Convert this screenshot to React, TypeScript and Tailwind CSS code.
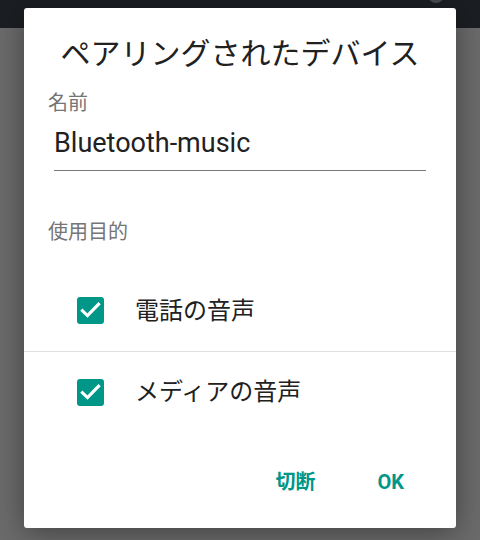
import React from "react";

const font = { fontFamily: "Roboto, 'Noto Sans CJK JP', sans-serif" };

const Check = () => (
  <span className="flex h-[27px] w-[27px] shrink-0 items-center justify-center rounded-[3px] bg-[#009688]">
    <svg viewBox="0 0 27 27" className="h-[27px] w-[27px]">
      <polyline
        points="5.5,13.8 10.5,18.6 21.5,7.2"
        fill="none"
        stroke="#fff"
        strokeWidth="3.2"
        strokeLinecap="square"
      />
    </svg>
  </span>
);

const PurposeRow = ({ label, divider }: { label: string; divider?: boolean }) => (
  <div
    className={`flex items-center gap-[31px] pl-[53px] ${
      divider ? "h-[82px] border-b border-[#e0e0e0]" : "h-[80px]"
    }`}
  >
    <Check />
    <span className="text-[24px] leading-[30px] text-[#212121]">{label}</span>
  </div>
);

export default function App() {
  return (
    <div className="relative h-[540px] w-[480px] overflow-hidden bg-[#6b6b6b]" style={font}>
      {/* background app chrome */}
      <div className="relative h-[28px] bg-[#1b1f23]">
        <span className="absolute right-[36px] top-[-13px] h-[16px] w-[16px] rounded-full bg-[#4a4d50]" />
      </div>

      {/* dialog */}
      <div className="absolute left-[24px] top-[8px] flex h-[520px] w-[432px] flex-col rounded-[3px] bg-white shadow-[0_4px_30px_rgba(0,0,0,0.4)]">
        <h1 className="pt-[26px] text-center text-[30px] font-normal leading-[40px] text-[#212121]">
          ペアリングされたデバイス
        </h1>

        <div className="px-[24px]">
          <div className="mt-[17px] text-[20px] leading-[24px] text-[#757575]">名前</div>
          <div className="ml-[6px] mr-[6px] mt-[10px] border-b border-[#7a7a7a] pb-[9px] text-[27px] leading-[36px] text-[#212121]">
            Bluetooth-music
          </div>
          <div className="mt-[49px] text-[20px] leading-[24px] text-[#757575]">使用目的</div>
        </div>

        <div className="mt-[26px]">
          <PurposeRow label="電話の音声" divider />
          <PurposeRow label="メディアの音声" />
        </div>

        <div className="flex flex-1 items-center justify-end gap-[62px] pr-[52px] pt-[3px] text-[20px] font-bold leading-[24px] text-[#009688]">
          <button>切断</button>
          <button>OK</button>
        </div>
      </div>
    </div>
  );
}
